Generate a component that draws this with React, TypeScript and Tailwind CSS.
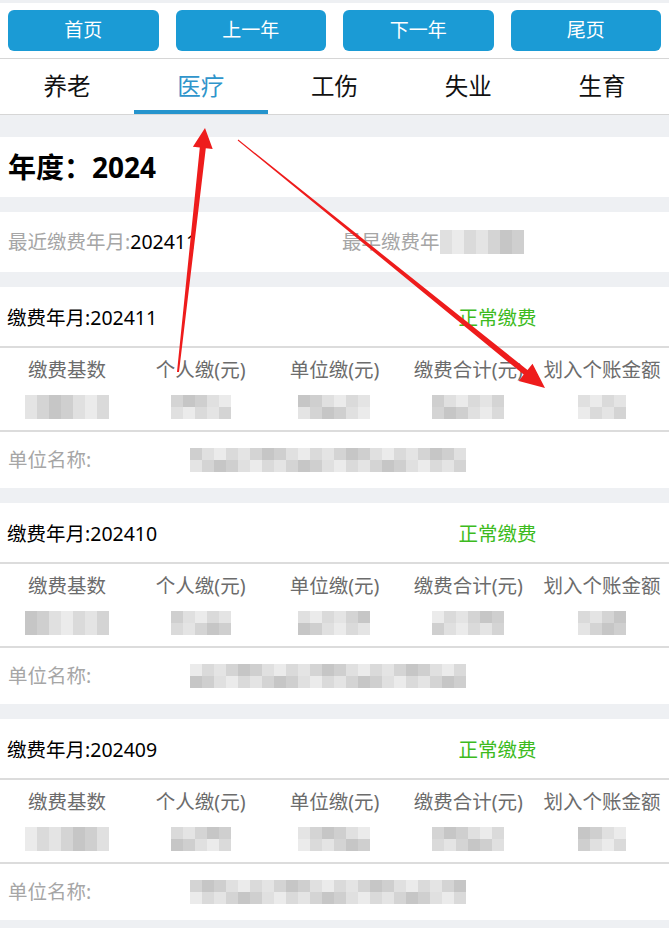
import React from "react";

const FONT = { fontFamily: '"Noto Sans", "Noto Sans CJK SC", sans-serif' };

const SHADES = [
  "bg-[#e4e4e4]",
  "bg-[#cfcfcf]",
  "bg-[#dadada]",
  "bg-[#c6c6c6]",
  "bg-[#ebebeb]",
  "bg-[#d4d4d4]",
  "bg-[#e0e0e0]",
];

const COLS = ["缴费基数", "个人缴(元)", "单位缴(元)", "缴费合计(元)", "划入个账金额"];
const VALUE_CELLS = [7, 5, 6, 6, 4];

// pixelated (blurred-out) block
function Mosaic({ cols, rows = 2, cell = 12, seed = 0 }: { cols: number; rows?: number; cell?: number; seed?: number }) {
  const cells = Array.from({ length: cols * rows }, (_, i) => SHADES[(i * 3 + seed * 5 + (i % cols) * 2) % SHADES.length]);
  return (
    <div className="grid" style={{ gridTemplateColumns: `repeat(${cols}, ${cell}px)`, gridAutoRows: `${cell}px` }}>
      {cells.map((c, i) => (
        <div key={i} className={c} />
      ))}
    </div>
  );
}

function Record({ month, seed }: { month: string; seed: number }) {
  return (
    <div className="bg-white">
      <div className="flex h-[61px] items-center border-b-2 border-[#dcdcdc] pt-[2px]">
        <div className="w-1/2 pl-[7px] text-[19.5px] text-black">缴费年月:{month}</div>
        <div className="pl-[124px] text-[19.5px] text-[#3dbb1e]">正常缴费</div>
      </div>
      <div className="grid h-[84px] grid-cols-5 border-b-2 border-[#dcdcdc]">
        {COLS.map((c, i) => (
          <div key={c} className="flex flex-col items-center pt-[8px]">
            <div className="text-[19.5px] leading-[28px] text-[#6c6c6c]">{c}</div>
            <div className="mt-[11px]">
              <Mosaic cols={VALUE_CELLS[i]} seed={seed + i} />
            </div>
          </div>
        ))}
      </div>
      <div className="flex h-[56px] items-center">
        <div className="w-[190px] pl-[8px] text-[19.5px] text-[#a6a6a6]">单位名称:</div>
        <Mosaic cols={23} cell={12} seed={seed + 3} />
      </div>
    </div>
  );
}

export default function App() {
  return (
    <div className="relative h-[928px] w-[669px] overflow-hidden bg-[#eef0f3]" style={FONT}>
      {/* top buttons */}
      <div className="mt-[3px] grid grid-cols-4 gap-[17px] bg-white px-[8px] py-[7px]">
        {["首页", "上一年", "下一年", "尾页"].map((b) => (
          <button key={b} type="button" className="h-[41px] rounded-[6px] bg-[#1b9bd5] text-[19px] text-white">
            {b}
          </button>
        ))}
      </div>

      {/* tabs */}
      <div className="grid h-[57px] grid-cols-5 border-y border-[#d6d6d6] bg-white">
        {["养老", "医疗", "工伤", "失业", "生育"].map((t, i) => (
          <div
            key={t}
            className={
              i === 1
                ? "flex items-center justify-center border-b-4 border-[#2594cd] pt-[4px] text-[23.5px] text-[#2f95cb]"
                : "flex items-center justify-center text-[23.5px] text-[#111]"
            }
          >
            {t}
          </div>
        ))}
      </div>

      <div className="mt-[22px] flex flex-col gap-[15px]">
        <div className="flex h-[60px] items-center bg-white pl-[8px] text-[28px] font-bold text-black">年度：2024</div>

        <div className="flex h-[60px] items-center bg-white text-[19.5px]">
          <div className="w-[342px] pl-[8px]">
            <span className="text-[#a6a6a6]">最近缴费年月:</span>
            <span className="text-black">202411</span>
          </div>
          <div className="flex items-center">
            <span className="text-[#a6a6a6]">最早缴费年</span>
            <Mosaic cols={7} seed={4} cell={12} />
          </div>
        </div>

        <Record month="202411" seed={0} />
        <Record month="202410" seed={2} />
        <Record month="202409" seed={5} />
      </div>

      {/* red annotation arrows */}
      <svg className="pointer-events-none absolute left-0 top-0" width="669" height="928">
        <polygon
          points="177,372 199.8,147.6 192.9,146.8 205,128 212.7,149 205.8,148.2 179,372"
          fill="#ee1c1c"
        />
        <polygon
          points="237.7,140.4 523.7,374.6 518.7,380.9 545,388 532.5,363.7 527.5,370 238.3,139.6"
          fill="#ee1c1c"
        />
      </svg>
    </div>
  );
}
